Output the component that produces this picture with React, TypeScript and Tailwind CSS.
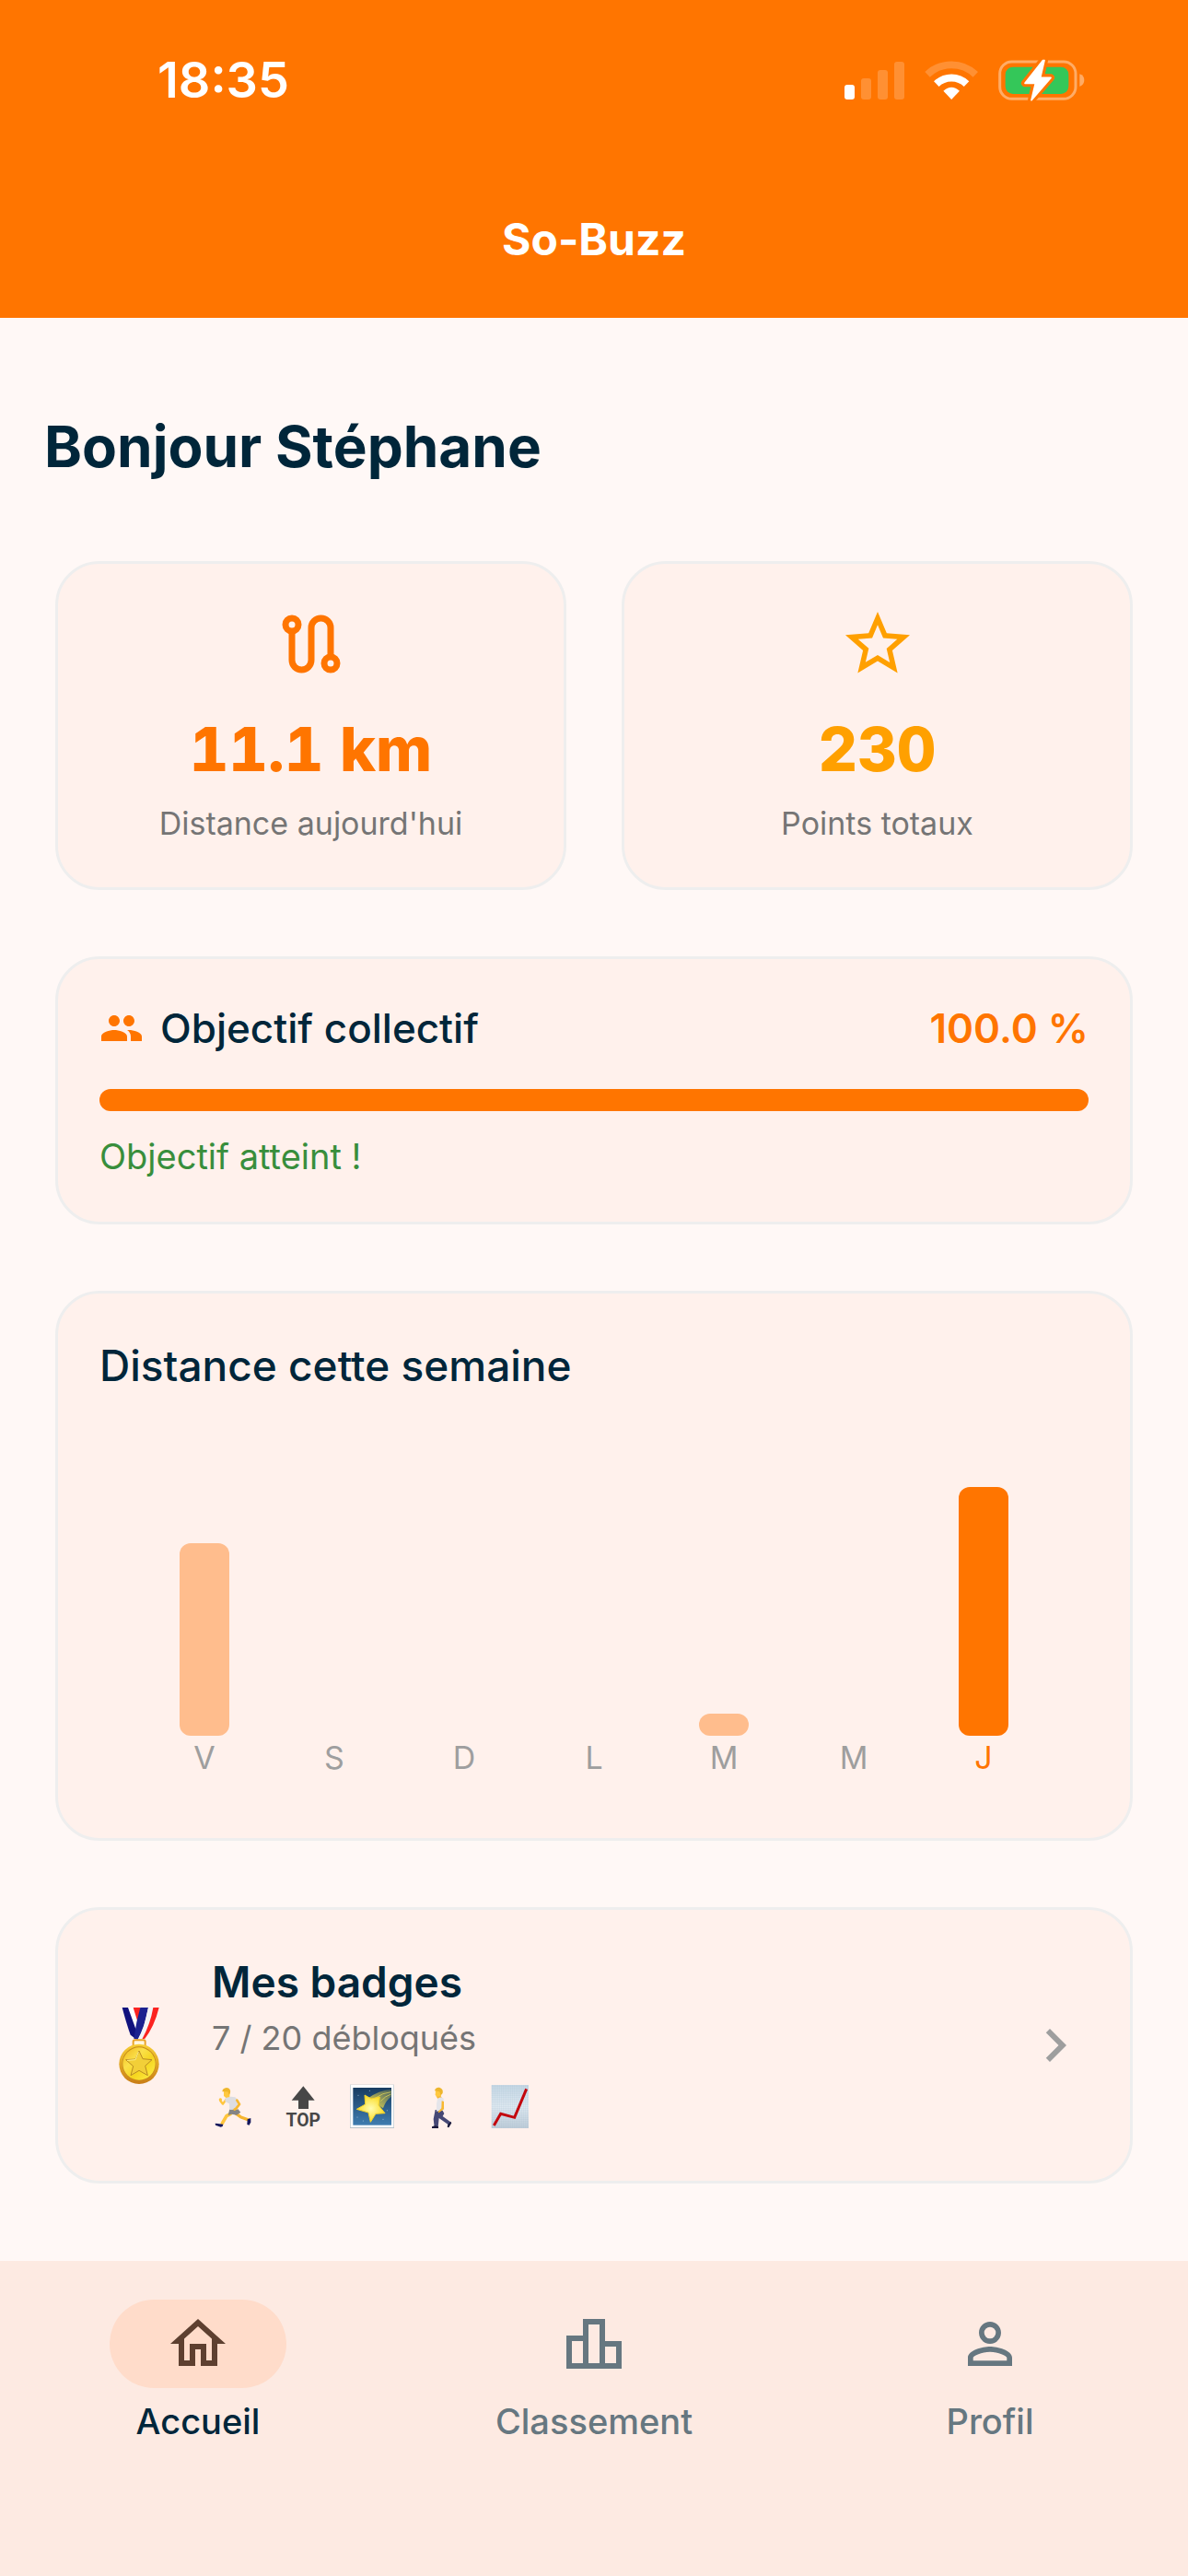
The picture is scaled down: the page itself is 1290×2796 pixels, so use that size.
import React from 'react';
import clsx from 'clsx';
import {
    MdStarBorder, MdPeople, MdChevronRight,
    MdOutlineHome, MdOutlineLeaderboard, MdPersonOutline
} from 'react-icons/md';

interface DayStat {
    id: string;
    label: string;
    height: number;
    today?: boolean;
}

const week: DayStat[] = [
    { id: 'ven', label: 'V', height: 209 },
    { id: 'sam', label: 'S', height: 0 },
    { id: 'dim', label: 'D', height: 0 },
    { id: 'lun', label: 'L', height: 0 },
    { id: 'mar', label: 'M', height: 24 },
    { id: 'mer', label: 'M', height: 0 },
    { id: 'jeu', label: 'J', height: 270, today: true },
];

const tabs = [
    { label: 'Accueil', icon: MdOutlineHome, active: true },
    { label: 'Classement', icon: MdOutlineLeaderboard, active: false },
    { label: 'Profil', icon: MdPersonOutline, active: false },
];

const cardClass = 'rounded-[48px] border-[3px] border-[#eeeeee] bg-[#fff1ec] p-[45px]';

/* Status bar icons */
const SignalIcon = () => (
    <svg viewBox="108 78 195 123" className="w-[65px] h-[41px]" fill="#fff">
        <rect x="108" y="153" width="33" height="48" rx="9" />
        <rect x="162" y="132" width="33" height="69" rx="9" opacity=".2" />
        <rect x="216" y="105" width="33" height="96" rx="9" opacity=".2" />
        <rect x="270" y="78" width="33" height="123" rx="9" opacity=".2" />
    </svg>
);

const WifiIcon = () => (
    <svg viewBox="370 75 174 127" className="w-[58px] h-[42px]" fill="none" stroke="#fff" strokeWidth="24">
        <path d="M378.500 120A114 114 0 0 1 536.500 120" opacity=".2" />
        <path d="M408 151A71 71 0 0 1 507 151" />
        <path d="M457.500 202L431 174Q457.500 150 484 174Z" fill="#fff" stroke="none" />
    </svg>
);

const BatteryIcon = () => (
    <svg viewBox="611 70 282 138" className="w-[94px] h-[46px]">
        <rect x="616" y="79" width="247" height="121" rx="39" fill="none" stroke="#fff" strokeOpacity=".4" strokeWidth="9" />
        <path d="M876 119Q891 124 891 139T876 160Z" fill="#fff" opacity=".4" />
        <rect x="634" y="96" width="206" height="88" rx="25" fill="#34c759" />
        <path d="M756 75L698 149H732L719 204L782 131H748L761 75Z" fill="#ff7500" stroke="#ff7500" strokeWidth="24" strokeLinejoin="round" />
        <path d="M756 75L698 149H732L719 204L782 131H748L761 75Z" fill="#fff" stroke="#fff" strokeWidth="5" strokeLinejoin="round" />
    </svg>
);

const RouteIcon = () => (
    <svg viewBox="0 0 24 24" className="size-[84px]" fill="none" stroke="currentColor" strokeWidth="2">
        <circle cx="6" cy="6" r="2" />
        <circle cx="18" cy="18" r="2" />
        <path d="M6 8V17A3 3 0 0 0 12 17V7A3 3 0 0 1 18 7V16" />
    </svg>
);

/* Badge drawings */
const Medal = () => (
    <svg viewBox="24 54 258 252" className="w-[86px] h-[84px] shrink-0" aria-label="Médaille">
        <defs>
            <linearGradient id="rim" x1="0" y1="0" x2="0" y2="1">
                <stop offset="0" stopColor="#f7cf35" />
                <stop offset="1" stopColor="#c97d16" />
            </linearGradient>
            <linearGradient id="disc" x1="0" y1="0" x2="1" y2="1">
                <stop offset="0" stopColor="#f0b619" />
                <stop offset=".35" stopColor="#fbe04a" />
                <stop offset=".6" stopColor="#f5d51f" />
                <stop offset="1" stopColor="#fff04a" />
            </linearGradient>
        </defs>
        <path d="M130 57H157L150 118Z" fill="#fb2320" />
        <path d="M115 57H134L155 125L140 155Z" fill="#fff" />
        <path d="M98 57H117L147 140L143 160L125 146Q112 110 98 57Z" fill="#11127e" />
        <path d="M157 57H183L168 120L150 162L136 158L145 105Z" fill="#1c2290" />
        <path d="M183 57H199Q190 110 165 160L148 162Q172 120 183 57Z" fill="#f4f4f6" />
        <path d="M199 57H218Q203 118 172 158L163 160Q190 110 199 57Z" fill="#fb2320" />
        <path d="M134 184V168Q134 163 140 163H168Q173 163 173 168V184" fill="#fff6de" stroke="#eaa529" strokeWidth="6" />
        <circle cx="153" cy="241" r="65" fill="url(#rim)" />
        <circle cx="153" cy="239" r="55" fill="#c48a18" />
        <circle cx="153" cy="240" r="53" fill="url(#disc)" />
        <path d="M153 198L165 224L195 227L173 247L181 278L153 262L126 278L134 248L110 227L141 225Z" fill="#f2cf38" stroke="#b98b22" strokeWidth="3" strokeLinejoin="round" />
        <path d="M151 201L141 227L114 229" fill="none" stroke="#fff08a" strokeWidth="3" />
    </svg>
);

const Runner = () => (
    <svg viewBox="60 66 144 144" className="size-12" strokeLinecap="round" strokeLinejoin="round">
        <path d="M136 160L155 174L180 183" fill="none" stroke="#f5b52e" strokeWidth="10" />
        <path d="M121 163L108 170L94 194" fill="none" stroke="#ffc53d" strokeWidth="11" />
        <path d="M71 194L80 195L97 197L95 204L89 206L72 200Z" fill="#14175c" />
        <path d="M176 181L187 177L187 190L182 200L175 198Z" fill="#14175c" />
        <path d="M118 148L144 146L154 158L141 167L124 164L113 168Z" fill="#858585" />
        <path d="M107 116L96 131L88 121" fill="none" stroke="#ffc53d" strokeWidth="7" />
        <path d="M104 111Q120 104 136 109L148 121L143 128L144 149L118 150L117 130L103 123Z" fill="#dddde1" />
        <path d="M142 119L150 132L139 146L134 149" fill="none" stroke="#f8b830" strokeWidth="8" />
        <path d="M99 91Q108 85 119 91L118 108L106 111L99 105Z" fill="#ffc83f" />
        <path d="M94 91Q95 79 108 78Q123 80 120 95L116 101L112 91Z" fill="#efb62a" />
        <circle cx="88" cy="117" r="5" fill="#ffc53d" stroke="none" />
    </svg>
);

const TopArrow = () => (
    <svg viewBox="285 66 144 144" className="size-12 overflow-visible" fill="#474747">
        <path d="M358 73L395 119H375V147H342V119H320Z" />
        <text x="358" y="204" textAnchor="middle" className="font-['Roboto'] text-[58px] font-bold">TOP</text>
    </svg>
);

const ShootingStar = () => (
    <svg viewBox="510 66 144 144" className="size-12">
        <defs>
            <linearGradient id="sky" x1="0" y1="0" x2="0" y2="1">
                <stop offset="0" stopColor="#183c61" />
                <stop offset="1" stopColor="#3f7db0" />
            </linearGradient>
            <linearGradient id="trail" x1="0" y1="1" x2="1" y2="0">
                <stop offset="0" stopColor="#f6e348" />
                <stop offset="1" stopColor="#b5ac48" stopOpacity=".3" />
            </linearGradient>
            <radialGradient id="glow">
                <stop offset="0" stopColor="#fffcb0" />
                <stop offset="1" stopColor="#fbdc25" />
            </radialGradient>
        </defs>
        <rect x="510" y="68" width="144" height="142" fill="#b9c3ca" />
        <rect x="512" y="69" width="140" height="138" fill="#fff" />
        <rect x="520" y="78" width="125" height="122" fill="url(#sky)" />
        <path d="M570 112Q603 87 644 84V107Q626 120 618 145Z" fill="url(#trail)" />
        <path d="M592 112Q617 94 644 92M610 122Q625 105 644 99" stroke="#eadb57" strokeWidth="3" fill="none" opacity=".7" />
        <path d="M558 102L579 114L607 108L603 135L624 161L594 163L577 190L570 159L532 148L560 132Z" fill="url(#glow)" stroke="#f4d328" strokeWidth="3" strokeLinejoin="round" />
        <g fill="#a9cbe2">
            <circle cx="537" cy="103" r="1.5" />
            <circle cx="534" cy="174" r="1.5" />
            <circle cx="553" cy="186" r="1.5" />
            <circle cx="618" cy="181" r="1.5" />
            <circle cx="631" cy="152" r="1.5" />
            <circle cx="574" cy="88" r="1.5" />
        </g>
    </svg>
);

const Walker = () => (
    <svg viewBox="735 66 144 144" className="size-12" strokeLinejoin="round">
        <path d="M790 104L805 104L810 112L796 114Z" fill="#f3b437" />
        <path d="M788 150L811 151L817 162L812 171L838 190L831 199L800 177L797 207H785L782 180Z" fill="#454875" />
        <path d="M777 205L786 202L798 204L798 210H777Z" fill="#191a3c" />
        <path d="M829 197L838 188L841 193L832 208L827 206Z" fill="#191a3c" />
        <path d="M795 114Q806 106 815 113L817 151L792 155L792 130Z" fill="#e5e5ea" />
        <path d="M809 121L816 123L816 148L799 160L797 156L808 145Z" fill="#f8b830" />
        <path d="M789 88L808 85L807 105L793 108L788 101Z" fill="#ffc83f" />
        <path d="M786 88Q788 76 801 77Q815 81 812 96L806 103L802 91Z" fill="#edb52c" />
    </svg>
);

const Chart = () => (
    <svg viewBox="960 66 144 144" className="size-12">
        <defs>
            <linearGradient id="paper" x1="0" y1="0" x2="0" y2="1">
                <stop offset="0" stopColor="#c6d8e5" />
                <stop offset=".5" stopColor="#e0eaf2" />
                <stop offset="1" stopColor="#bdccd8" />
            </linearGradient>
            <pattern id="grid" width="6" height="6" patternUnits="userSpaceOnUse">
                <path d="M0 0H6M0 0V6" stroke="#a4bdcc" strokeWidth="1" />
            </pattern>
        </defs>
        <rect x="971" y="69" width="121" height="141" fill="url(#paper)" />
        <rect x="971" y="69" width="121" height="141" fill="url(#grid)" />
        <path d="M979 201L1001 163L1046 175L1085 82" fill="none" stroke="#c3070d" strokeWidth="9" />
    </svg>
);

interface StatCardProps {
    icon: React.ReactNode;
    value: string;
    label: string;
    color: string;
}

const StatCard: React.FC<StatCardProps> = ({ icon, value, label, color }) => (
    <div className={clsx(cardClass, 'flex flex-1 flex-col items-center')}>
        <div className={color}>{icon}</div>
        <p className={clsx('mt-6 text-[66px] leading-[96px] font-extrabold tabular-nums', color)}>{value}</p>
        <p className="mt-[9px] text-[34px] leading-[48px] text-[#757575]">{label}</p>
    </div>
);

const App: React.FC = () => {
    return (
        <div className="min-h-screen flex flex-col bg-[#fff8f6] text-[#00263a] font-['Inter','Liberation_Sans',sans-serif]">
            {/* Header */}
            <header className="bg-[#ff7500] text-white">
                <div className="h-[174px] flex items-center justify-between pl-[171px] pr-28">
                    <span className="text-[54px] leading-[60px] font-semibold">18:35</span>
                    <div className="flex items-center gap-[22px]">
                        <SignalIcon />
                        <WifiIcon />
                        <BatteryIcon />
                    </div>
                </div>
                <div className="h-[171px] flex items-center justify-center">
                    <h1 className="text-[48px] leading-[60px] font-bold">So-Buzz</h1>
                </div>
            </header>

            <main className="flex-1 pt-24 pb-[84px]">
                <h2 className="px-12 text-[62px] leading-[87px] font-bold">Bonjour Stéphane</h2>

                <div className="mt-[81px] px-[60px] flex flex-col gap-[72px]">
                    {/* Stats */}
                    <div className="flex gap-[60px]">
                        <StatCard
                            icon={<RouteIcon />}
                            value="11.1 km"
                            label="Distance aujourd'hui"
                            color="text-[#ff7500]"
                        />
                        <StatCard
                            icon={<MdStarBorder size={84} />}
                            value="230"
                            label="Points totaux"
                            color="text-[#ffa000]"
                        />
                    </div>

                    {/* Collective goal */}
                    <section className={cardClass}>
                        <div className="flex items-center justify-between">
                            <h3 className="flex items-center gap-[18px] text-[44px] leading-[60px] font-medium">
                                <MdPeople size={48} className="text-[#ff7500]" /> Objectif collectif
                            </h3>
                            <span className="text-[44px] leading-[60px] font-semibold text-[#ff7500]">100.0 %</span>
                        </div>
                        <div className="mt-9 h-6 rounded-full bg-[#ff7500]" role="progressbar" aria-label="Objectif collectif" aria-valuenow={100} />
                        <p className="mt-6 text-[38px] leading-[51px] text-[#388e3c]">Objectif atteint !</p>
                    </section>

                    {/* Weekly chart */}
                    <section className={cardClass}>
                        <h3 className="text-[46px] leading-[66px] font-medium">Distance cette semaine</h3>
                        <div className="mt-12 pb-[18px] flex justify-evenly">
                            {week.map(day => (
                                <div key={day.id} className="w-[54px]">
                                    <div className="h-[321px] flex items-end">
                                        <div
                                            className={clsx('w-full rounded-xl', day.today ? 'bg-[#ff7500]' : 'bg-[#ffbd8d]')}
                                            style={{ height: day.height }}
                                        />
                                    </div>
                                    <p className={clsx('text-center text-[34px] leading-[48px]', day.today ? 'text-[#ff7500]' : 'text-[#9e9e9e]')}>
                                        {day.label}
                                    </p>
                                </div>
                            ))}
                        </div>
                    </section>

                    {/* Badges */}
                    <button className={clsx(cardClass, 'flex items-center gap-9 text-left')}>
                        <Medal />
                        <div className="flex-1 pb-3">
                            <h3 className="text-[46px] leading-[66px] font-semibold">Mes badges</h3>
                            <p className="mt-[3px] text-[36px] leading-[51px] text-[#757575]">7 / 20 débloqués</p>
                            <div className="mt-6 flex gap-[27px]">
                                <Runner />
                                <TopArrow />
                                <ShootingStar />
                                <Walker />
                                <Chart />
                            </div>
                        </div>
                        <MdChevronRight size={72} className="text-[#9e9e9e]" />
                    </button>
                </div>
            </main>

            {/* Bottom navigation */}
            <nav className="grid grid-cols-3 bg-[#fdeae2] pt-[42px] pb-36">
                {tabs.map(({ label, icon: Icon, active }) => (
                    <button key={label} className={clsx('flex flex-col items-center', active ? 'text-[#00263a]' : 'text-[#667780]')}>
                        <span className={clsx('w-48 h-24 rounded-full flex items-center justify-center', active && 'bg-[#ffdcca] text-[#5e4030]')}>
                            <Icon size={72} />
                        </span>
                        <span className="mt-3 text-[38px] leading-[48px] font-medium">{label}</span>
                    </button>
                ))}
            </nav>
        </div>
    );
};

export default App;
